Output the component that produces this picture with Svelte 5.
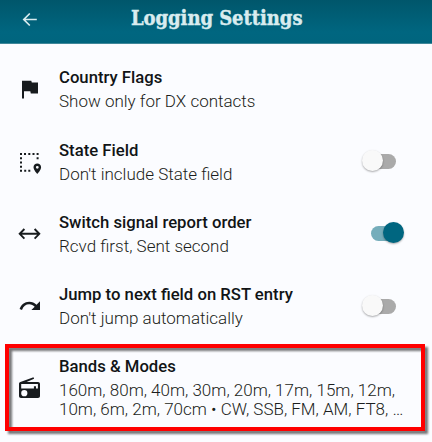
<script>
  const rows = [
    { icon: 'flag', title: 'Country Flags', lines: ['Show only for DX contacts'] },
    { icon: 'area', title: 'State Field', lines: ["Don't include State field"], toggle: 'off' },
    { icon: 'swap', title: 'Switch signal report order', lines: ['Rcvd first, Sent second'], toggle: 'on' },
    { icon: 'jump', title: 'Jump to next field on RST entry', lines: ["Don't jump automatically"], toggle: 'off' },
    { icon: 'radio', title: 'Bands & Modes', lines: ['160m, 80m, 40m, 30m, 20m, 17m, 15m, 12m,', '10m, 6m, 2m, 70cm • CW, SSB, FM, AM, FT8, …'], marked: true }
  ];
</script>

<div class="screen">
  <header>
    <svg class="back" width="16" height="16" viewBox="0 0 16 16"><path d="M14.800 7.500H2M7.800 1.500 1.800 7.500 7.800 13.500" fill="none" stroke="#d9ecef" stroke-width="1.700" /></svg>
    <h1>Logging Settings</h1>
  </header>
  <main>
    {#each rows as row}
      <section class:marked={row.marked}>
        <svg class="icon" width="26" height="26" viewBox="0 0 26 26">
          {#if row.icon === 'flag'}
            <path d="M6 4.700h9.300l.5 1.700H22v11h-7.200l-.5-2.200H8v7.300H6z" />
          {:else if row.icon === 'area'}
            <path d="M4 4h2v2H4zM8 4h2v2H8zM12.300 4h2v2h-2zM16.500 4h2v2h-2zM20.600 4h2v2h-2zM4 8.200h2v2H4zM20.600 8.200h2v2h-2zM4 12.500h2v2H4zM4 16.700h2v2H4zM4 20.800h2v2H4zM8.200 20.800h2v2h-2zM12.300 20.800h2v2h-2z" />
            <path fill-rule="evenodd" d="M21.300 14.500c2.100 0 3.800 1.600 3.800 3.700 0 2.800-3.800 6.700-3.800 6.700s-3.800-3.900-3.800-6.700c0-2.100 1.700-3.700 3.800-3.700zm0 2.400a1.400 1.400 0 1 0 0 2.800 1.400 1.400 0 0 0 0-2.800z" />
          {:else if row.icon === 'swap'}
            <path d="M4 12.800h19M8.400 8l-4.700 4.800 4.700 4.800M18.600 8l4.700 4.800-4.700 4.800" fill="none" stroke="#171b1e" stroke-width="1.900" />
          {:else if row.icon === 'jump'}
            <path d="M24 8.300v8.600h-8.600l3.300-3.200c-1.400-1.500-3.300-2.400-5.500-2.400-3.300 0-6 2-7.200 5.600l-2.400-.8C5.100 11.600 8.500 8.700 13.200 8.700c2.900 0 5.400 1.200 7.300 3.100z" />
          {:else}
            <path fill-rule="evenodd" d="M17.500 2.200l.6 1.600L10.600 7H22c1.200 0 2 .8 2 2v12c0 1.200-.8 2-2 2H5c-1.200 0-2-.8-2-2V9c0-1 .5-1.600 1.400-2zM5.200 9v4.500h12.700v-2.200h2.100v2.200h1.900V9zM8.300 15.100a3.100 3.100 0 1 0 0 6.200 3.100 3.100 0 0 0 0-6.200z" />
          {/if}
        </svg>
        <div class="copy">
          <h2>{row.title}</h2>
          {#each row.lines as line}
            <p>{line}</p>
          {/each}
        </div>
        {#if row.toggle}
          <div class="toggle {row.toggle}"><i></i></div>
        {/if}
        {#if row.marked}<div class="outline"></div>{/if}
      </section>
    {/each}
  </main>
</div>

<style>
  .screen { width: 432px; height: 442px; overflow: hidden; background: #fbfcff; font-family: Roboto, sans-serif; }
  header { height: 44px; box-sizing: border-box; display: flex; background: linear-gradient(#00566b, #006680 75%, #00657e); border-bottom: 1px solid #3f8799; }
  .back { margin: 12px 0 0 22px; flex: none; }
  h1 { margin: 5px 0 0 93px; font: bold 20px/26px "Roboto Slab", "DejaVu Serif", serif; font-stretch: condensed; letter-spacing: -0.05px; color: #d9ecef; -webkit-text-stroke: 0.4px #d9ecef; white-space: nowrap; }
  main { padding-top: 9px; }
  section { position: relative; display: flex; height: 72.4px; align-items: center; padding-left: 16px; box-sizing: border-box; }
  section.marked { height: 90px; }
  .icon { flex: none; fill: #171b1e; }
  .copy { margin-left: 17px; flex: 1; white-space: nowrap; }
  h2 { margin: 0; font-weight: 500; font-size: 16.7px; line-height: 24px; color: #111416; }
  p { margin: 0; font-weight: 300; font-size: 17px; line-height: 22px; color: #1b1e20; }
  .marked p { line-height: 19px; }
  .marked h2 { line-height: 29px; margin-top: -1px; }
  .marked .copy { padding-bottom: 3px; }
  .toggle { position: relative; width: 33px; height: 15px; margin-right: 36px; flex: none; }
  .toggle::before { content: ''; position: absolute; left: 7px; top: 0; width: 25.5px; height: 15px; border-radius: 8px; background: #aaa; }
  .toggle i { position: absolute; left: -1px; top: -4px; width: 21px; height: 21px; border-radius: 50%; background: #f9f9f9; box-shadow: 0 1px 2px #0005; }
  .on::before { background: #75adbb; left: 8px; }
  .on i { left: 20px; background: #006680; }
  .outline { position: absolute; left: 5px; top: 1.400px; width: 420px; height: 87px; box-sizing: border-box; border: 4px solid #f00; filter: drop-shadow(3px 3px 1px #0008); }
</style>
